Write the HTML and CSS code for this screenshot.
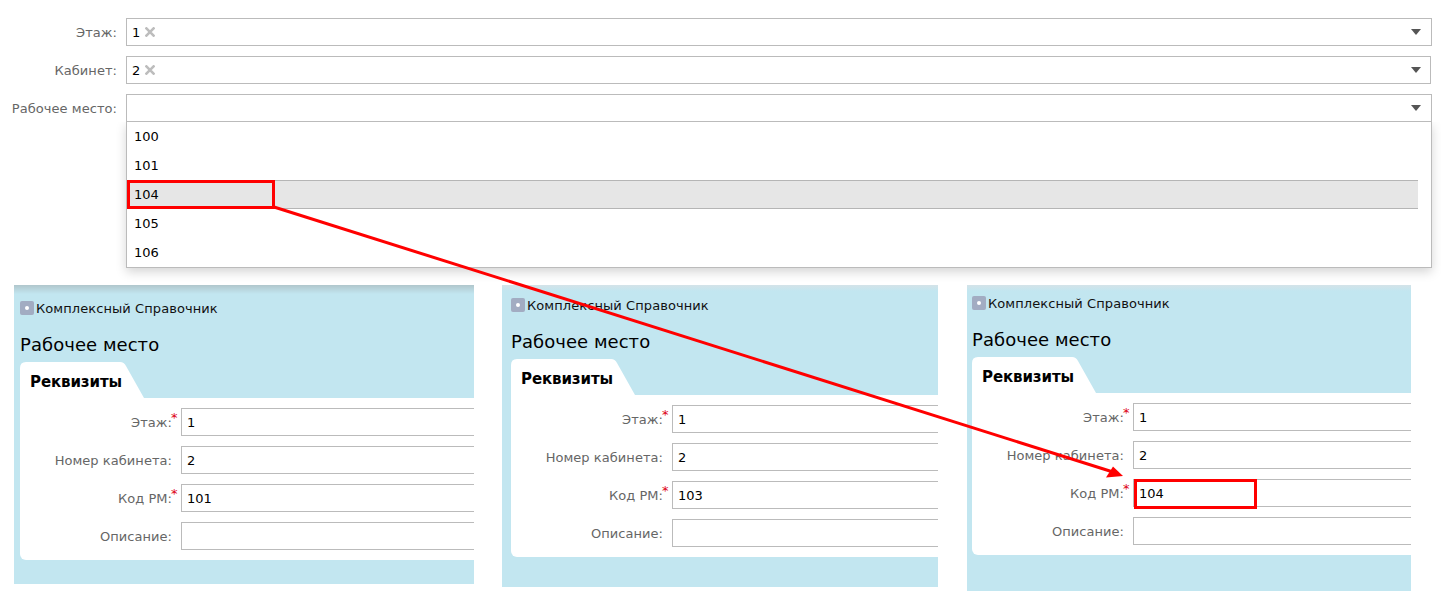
FILE: index.html
```html
<!DOCTYPE html>
<html lang="ru">
<head>
<meta charset="utf-8">
<title>Рабочее место</title>
<link rel="stylesheet" href="styles.css">
</head>
<body>
<main class="page">
  <section class="filters">
    <div class="filter-row">
      <label class="filter-label">Этаж:</label>
      <div class="select">
        <span class="chip">1</span>
        <svg class="chip-x" width="10" height="10" viewBox="0 0 10 10"><path d="M.5.5l9 9M9.5.5l-9 9"/></svg>
        <svg class="caret" width="10" height="6" viewBox="0 0 10 6"><path d="M0 0h10L5 6z"/></svg>
      </div>
    </div>
    <div class="filter-row">
      <label class="filter-label">Кабинет:</label>
      <div class="select select--narrow">
        <span class="chip">2</span>
        <svg class="chip-x" width="10" height="10" viewBox="0 0 10 10"><path d="M.5.5l9 9M9.5.5l-9 9"/></svg>
        <svg class="caret" width="10" height="6" viewBox="0 0 10 6"><path d="M0 0h10L5 6z"/></svg>
      </div>
    </div>
    <div class="filter-row">
      <label class="filter-label">Рабочее место:</label>
      <div class="select select--open">
        <svg class="caret" width="10" height="6" viewBox="0 0 10 6"><path d="M0 0h10L5 6z"/></svg>
        <ul class="dropdown">
          <li class="option">100</li>
          <li class="option">101</li>
          <li class="option option--active">104</li>
          <li class="option">105</li>
          <li class="option">106</li>
        </ul>
      </div>
    </div>
  </section>

  <section class="panels">
    <article class="panel panel--a">
      <div class="crumb"><span class="crumb-icon"></span>Комплексный Справочник</div>
      <h1 class="title">Рабочее место</h1>
      <div class="tab">Реквизиты</div>
      <div class="card">
        <div class="field"><span class="field-label req">Этаж:</span><div class="input">1</div></div>
        <div class="field"><span class="field-label">Номер кабинета:</span><div class="input">2</div></div>
        <div class="field"><span class="field-label req">Код РМ:</span><div class="input">101</div></div>
        <div class="field"><span class="field-label">Описание:</span><div class="input"></div></div>
      </div>
    </article>
    <article class="panel panel--b">
      <div class="crumb"><span class="crumb-icon"></span>Комплексный Справочник</div>
      <h1 class="title">Рабочее место</h1>
      <div class="tab">Реквизиты</div>
      <div class="card">
        <div class="field"><span class="field-label req">Этаж:</span><div class="input">1</div></div>
        <div class="field"><span class="field-label">Номер кабинета:</span><div class="input">2</div></div>
        <div class="field"><span class="field-label req">Код РМ:</span><div class="input">103</div></div>
        <div class="field"><span class="field-label">Описание:</span><div class="input"></div></div>
      </div>
    </article>
    <article class="panel panel--c">
      <div class="crumb"><span class="crumb-icon"></span>Комплексный Справочник</div>
      <h1 class="title">Рабочее место</h1>
      <div class="tab">Реквизиты</div>
      <div class="card">
        <div class="field"><span class="field-label req">Этаж:</span><div class="input">1</div></div>
        <div class="field"><span class="field-label">Номер кабинета:</span><div class="input">2</div></div>
        <div class="field"><span class="field-label req">Код РМ:</span><div class="input">104</div></div>
        <div class="field"><span class="field-label">Описание:</span><div class="input"></div></div>
      </div>
    </article>
  </section>

  <div class="mark mark--option"></div>
  <div class="mark mark--input"></div>
  <svg class="arrow" width="1441" height="609" viewBox="0 0 1441 609">
    <path class="arrow-line" d="M274 207L1113 472"/>
    <path class="arrow-head" d="M1123 476L1113 466.5L1106 477.5z"/>
  </svg>
</main>
</body>
</html>
```
FILE: styles.css
```css
* { box-sizing: border-box; }
html, body { margin: 0; padding: 0; background: #fff; }
body { font-family: "DejaVu Sans", sans-serif; font-size: 13px; color: #000; }
.page { position: relative; width: 1441px; height: 609px; overflow: hidden; }

/* top filter form */
.filters { display: flex; flex-direction: column; gap: 10px; padding: 18px 9px 0 0; }
.filter-row { display: flex; align-items: center; height: 28px; }
.filter-label { width: 117px; margin-right: 9px; text-align: right; color: #666; white-space: nowrap; flex: none; letter-spacing: .05px; }
.select { position: relative; flex: 1; height: 28px; display: flex; align-items: center; padding-left: 5px; border: 1px solid #bbb; background: #fff; }
.select--narrow { margin-right: 1px; }
.chip { color: #000; margin-right: 5px; }
.chip-x { fill: none; stroke: #bdbdbd; stroke-width: 2.6; }
.caret { margin-left: auto; margin-right: 10px; fill: #555; }
.select--narrow .caret { margin-right: 9px; }

.dropdown { position: absolute; left: -1px; right: -1px; top: calc(100% + 1px); margin: 0; padding: 0; list-style: none; background: #fff; border: 1px solid #bbb; border-top: 0; box-shadow: 0 4px 10px rgba(0, 0, 0, .17); clip-path: inset(0 -14px -14px -14px); z-index: 2; }
.option { height: 29px; line-height: 30px; padding-left: 7px; margin-right: 13px; }
.option--active { background: #e6e6e6; border-top: 1px solid #b5b5b5; border-bottom: 1px solid #b5b5b5; line-height: 27px; }

/* collage of form screenshots */
.panels { display: flex; align-items: flex-start; margin-top: 163px; padding-left: 14px; }
.panel { flex: none; overflow: hidden; background: linear-gradient(#b0c6cc, #c2e6f0 9px); }
.panel--a { width: 460px; padding: 16px 0 24px 6px; margin-right: 28px; }
.panel--b { width: 436px; padding: 13px 0 30px 9px; margin-right: 29px; background: linear-gradient(#d4e3e8, #c2e6f0 6px); }
.panel--c { width: 444px; padding: 11px 0 36px 5px; background: linear-gradient(#d4e3e8, #c2e6f0 6px); }

.crumb { display: flex; align-items: center; height: 14px; color: #111; white-space: nowrap; letter-spacing: .08px; }
.crumb-icon { position: relative; flex: none; width: 14px; height: 14px; margin-right: 2px; border-radius: 2px; background: #a2acc2; }
.crumb-icon::after { content: ""; position: absolute; left: 5px; top: 5px; width: 4px; height: 4px; border-radius: 50%; background: #fff; }

.title { margin: 17px 0 6px; height: 24px; line-height: 25px; font-size: 18px; font-weight: 400; color: #000; white-space: nowrap; letter-spacing: .05px; }

.tab { width: 124px; height: 36px; padding-left: 10px; line-height: 41px; font-size: 15px; font-weight: 700; letter-spacing: -.1px; background: #fff; clip-path: path("M0 36V6Q0 0 6 0H100Q104 0 106 4L124 36Z"); }

.card { display: flex; flex-direction: column; gap: 10px; padding: 10px 0; background: #fff; border-bottom-left-radius: 6px; }
.field { display: flex; align-items: center; height: 28px; }
.field-label { position: relative; flex: none; width: 152px; margin-right: 9px; text-align: right; color: #666; white-space: nowrap; letter-spacing: .05px; }
.req::after { content: "*"; position: absolute; left: 100%; top: -5px; margin-left: -1px; color: #d01; font-size: 13px; line-height: 16px; }
.input { flex: 1; height: 28px; line-height: 28px; padding-left: 5px; border: 1px solid #bbb; border-right: 0; background: #fff; color: #000; }

/* red annotations */
.mark { position: absolute; border: 3px solid #f00; z-index: 3; }
.mark--option { left: 127px; top: 180px; width: 148px; height: 29px; }
.mark--input { left: 1134px; top: 479px; width: 123px; height: 30px; }
.arrow { position: absolute; left: 0; top: 0; z-index: 3; pointer-events: none; }
.arrow-line { fill: none; stroke: #f00; stroke-width: 3; }
.arrow-head { fill: #f00; }
```
